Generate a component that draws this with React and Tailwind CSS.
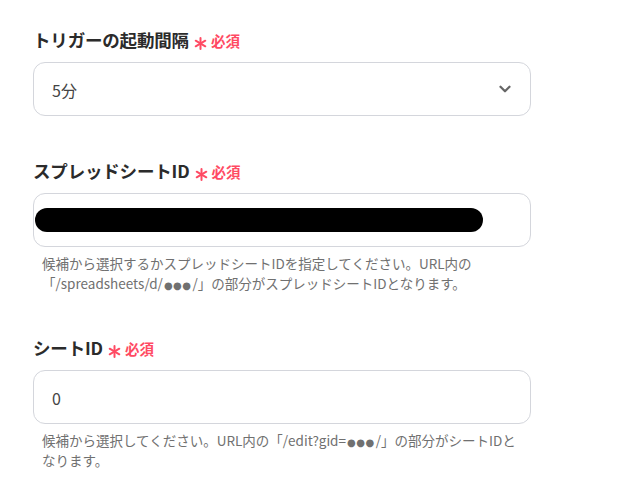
import { ChevronDown } from 'lucide-react'

const FONT = { fontFamily: '"Noto Sans CJK JP", "Noto Sans", sans-serif' }

function Star() {
  return (
    <svg width="13" height="13" viewBox="0 0 13 13" className="text-[#ff4a63]">
      <g stroke="currentColor" strokeWidth="2" strokeLinecap="round">
        <line x1="6.5" y1="1" x2="6.5" y2="12" />
        <line x1="1.7" y1="3.7" x2="11.3" y2="9.3" />
        <line x1="1.7" y1="9.3" x2="11.3" y2="3.7" />
      </g>
    </svg>
  )
}

function Label({ children }) {
  return (
    <div className="flex items-center h-[28px] mb-2">
      <span className="text-[17.5px] font-bold text-[#2b2b2b] tracking-[-0.01em]">{children}</span>
      <span className="ml-[5px] mt-[7px]">
        <Star />
      </span>
      <span className="ml-[4px] mt-[1px] text-[14.5px] font-bold text-[#ff4a63]">必須</span>
    </div>
  )
}

function Dots() {
  return (
    <span
      className="inline-block px-[1px] text-[10px] leading-[12px] tracking-[0.5px]"
      style={{ fontFamily: '"DejaVu Sans", sans-serif' }}
    >
      ●●●
    </span>
  )
}

function Help({ children }) {
  return (
    <p className="mt-[6px] pl-[9px] w-[490px] text-[13.5px] leading-[20px] text-[#707070]">{children}</p>
  )
}

const boxCls =
  'h-[54px] w-[498px] rounded-[12px] border border-[#d4d6dc] bg-white flex items-center'

export default function App() {
  return (
    <div className="w-[635px] h-[502px] bg-white px-[33px] pt-[26px]" style={FONT}>
      <div>
        <Label>トリガーの起動間隔</Label>
        <div className={`${boxCls} pl-[18px] pr-[16px] justify-between`}>
          <span className="text-[16px] text-[#444] mt-[2px]">5分</span>
          <ChevronDown size={18} strokeWidth={3} className="text-[#666]" />
        </div>
      </div>

      <div className="mt-[41px]">
        <Label>スプレッドシートID</Label>
        <div className={`${boxCls} pl-[1px]`}>
          <div className="h-[24px] w-[448px] rounded-full bg-black" />
        </div>
        <Help>
          候補から選択するかスプレッドシートIDを指定してください。URL内の「/spreadsheets/d/<Dots />/」の部分がスプレッドシートIDとなります。
        </Help>
      </div>

      <div className="mt-[41px]">
        <Label>シートID</Label>
        <div className={`${boxCls} pl-[18px]`}>
          <span className="text-[16px] text-[#444] mt-[2px]">0</span>
        </div>
        <Help>
          候補から選択してください。URL内の「/edit?gid=<Dots />/」の部分がシートIDとなります。
        </Help>
      </div>
    </div>
  )
}
